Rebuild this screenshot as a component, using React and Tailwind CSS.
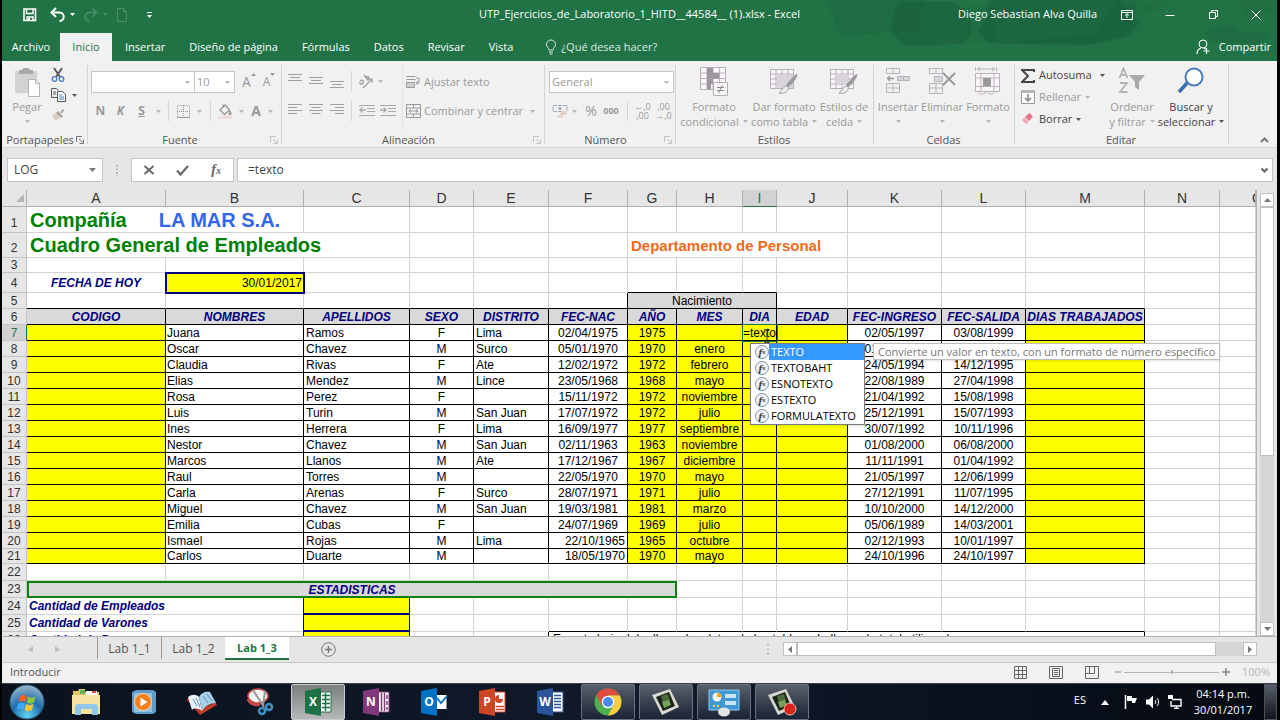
import clsx from 'clsx';

const COLUMNS = [
  { id: 'A', width: 'w-[139px]' },
  { id: 'B', width: 'w-[138px]' },
  { id: 'C', width: 'w-[106px]' },
  { id: 'D', width: 'w-16' },
  { id: 'E', width: 'w-[75px]' },
  { id: 'F', width: 'w-[79px]' },
  { id: 'G', width: 'w-[49px]' },
  { id: 'H', width: 'w-[66px]' },
  { id: 'I', width: 'w-[34px]' },
  { id: 'J', width: 'w-[71px]' },
  { id: 'K', width: 'w-[94px]' },
  { id: 'L', width: 'w-[84px]' },
  { id: 'M', width: 'w-[119px]' },
  { id: 'N', width: 'w-[75px]' },
  { id: 'O', width: '' },
];

const HEADINGS = [
  'CODIGO', 'NOMBRES', 'APELLIDOS', 'SEXO', 'DISTRITO', 'FEC-NAC', 'AÑO',
  'MES', 'DIA', 'EDAD', 'FEC-INGRESO', 'FEC-SALIDA', 'DIAS TRABAJADOS',
];

const EMPLEADOS = [
  ['Juana', 'Ramos', 'F', 'Lima', '02/04/1975', '1975', '', '02/05/1997', '03/08/1999'],
  ['Oscar', 'Chavez', 'M', 'Surco', '05/01/1970', '1970', 'enero', '01/02/1993', '05/10/1998'],
  ['Claudia', 'Rivas', 'F', 'Ate', '12/02/1972', '1972', 'febrero', '24/05/1994', '14/12/1995'],
  ['Elias', 'Mendez', 'M', 'Lince', '23/05/1968', '1968', 'mayo', '22/08/1989', '27/04/1998'],
  ['Rosa', 'Perez', 'F', '', '15/11/1972', '1972', 'noviembre', '21/04/1992', '15/08/1998'],
  ['Luis', 'Turin', 'M', 'San Juan', '17/07/1972', '1972', 'julio', '25/12/1991', '15/07/1993'],
  ['Ines', 'Herrera', 'F', 'Lima', '16/09/1977', '1977', 'septiembre', '30/07/1992', '10/11/1996'],
  ['Nestor', 'Chavez', 'M', 'San Juan', '02/11/1963', '1963', 'noviembre', '01/08/2000', '06/08/2000'],
  ['Marcos', 'Llanos', 'M', 'Ate', '17/12/1967', '1967', 'diciembre', '11/11/1991', '01/04/1992'],
  ['Raul', 'Torres', 'M', '', '22/05/1970', '1970', 'mayo', '21/05/1997', '12/06/1999'],
  ['Carla', 'Arenas', 'F', 'Surco', '28/07/1971', '1971', 'julio', '27/12/1991', '11/07/1995'],
  ['Miguel', 'Chavez', 'M', 'San Juan', '19/03/1981', '1981', 'marzo', '10/10/2000', '14/12/2000'],
  ['Emilia', 'Cubas', 'F', '', '24/07/1969', '1969', 'julio', '05/06/1989', '14/03/2001'],
  ['Ismael', 'Rojas', 'M', 'Lima', '22/10/1965', '1965', 'octubre', '02/12/1993', '10/01/1997'],
  ['Carlos', 'Duarte', 'M', '', '18/05/1970', '1970', 'mayo', '24/10/1996', '24/10/1997'],
];

const SUGERENCIAS = ['TEXTO', 'TEXTOBAHT', 'ESNOTEXTO', 'ESTEXTO', 'FORMULATEXTO'];

const Svg = ({ w = 16, h = 16, className, children, ...rest }) => (
  <svg
    width={w}
    height={h}
    viewBox={`0 0 ${w} ${h}`}
    fill="none"
    stroke="currentColor"
    aria-hidden="true"
    className={clsx('shrink-0', className)}
    {...rest}
  >
    {children}
  </svg>
);

const Caret = ({ className = 'text-[#b5b5b5]' }) => (
  <Svg w={5} h={3} className={className}>
    <path d="M0 0h5L2.5 3z" fill="currentColor" stroke="none" />
  </Svg>
);

/* ---------- title bar ---------- */

const QuickAccess = () => (
  <div className="flex items-center pl-5 text-white">
    <button type="button" aria-label="Guardar">
      <Svg>
        <path d="M2 2h11.5v11.5H2z" strokeWidth="1.6" />
        <path d="M4.500 2v4.500h6.500V2M5 13.500V10h6v3.500" strokeWidth="1.4" />
        <path d="M6 11h2v2.500H6z" fill="currentColor" stroke="none" />
      </Svg>
    </button>
    <button type="button" aria-label="Deshacer" className="ml-3 flex items-center gap-1">
      <Svg>
        <path d="M2 5.500h7.500a4 4 0 0 1 0 8.500" strokeWidth="2" />
        <path d="M6 1 1.500 5.500 6 10" strokeWidth="2" />
      </Svg>
      <Caret className="text-white" />
    </button>
    <button type="button" aria-label="Rehacer" className="ml-2 flex items-center gap-1 text-[#4c9069]">
      <Svg>
        <path d="M13 5.500H6.500a4 4 0 0 0 0 8.500M9.500 1.500 13.500 5.500l-4 4" strokeWidth="1.6" />
      </Svg>
      <Caret className="text-[#4c9069]" />
    </button>
    <button type="button" aria-label="Nuevo" className="ml-[6px] text-[#4c9069]">
      <Svg>
        <path d="M3.500 1.500h6l3 3v10h-9zM9.500 1.500v3h3" />
      </Svg>
    </button>
    <button type="button" aria-label="Personalizar" className="ml-4">
      <Svg w={7} h={8}>
        <path d="M1 1.500h5" />
        <path d="M1 4h5L3.500 7z" fill="currentColor" stroke="none" />
      </Svg>
    </button>
  </div>
);

const WINDOW_BUTTONS = [
  {
    label: 'Opciones de presentación de la cinta',
    icon: <path d="M2.500 3.500h11v9h-11zM2.500 5.500h11M8 11V7M6 8.500 8 6.800l2 1.700" />,
  },
  { label: 'Minimizar', icon: <path d="M3.500 8.500h9" /> },
  { label: 'Restaurar', icon: <path d="M4.500 5.500h6v6h-6zM6.500 5.500v-2h6v6h-2" /> },
  { label: 'Cerrar', icon: <path d="m3.500 3.500 9 9m0-9-9 9" /> },
];

const TitleBar = () => (
  <header className="relative grid h-[33px] grid-cols-[1fr_auto_1fr] items-center pb-1 text-[11px] text-white">
    <QuickAccess />
    <h1>UTP_Ejercicios_de_Laboratorio_1_HITD__44584__ (1).xlsx - Excel</h1>
    <div className="flex items-center justify-end">
      <span className="pr-2">Diego Sebastian Alva Quilla</span>
      {WINDOW_BUTTONS.map((b) => (
        <button key={b.label} type="button" aria-label={b.label} className="flex h-7 w-[43px] items-center justify-center">
          <Svg>{b.icon}</Svg>
        </button>
      ))}
    </div>
  </header>
);

/* brush strokes of the account's office background */
const BrushBackground = () => (
  <svg
    width="460"
    height="61"
    viewBox="0 0 460 61"
    fill="#185c37"
    aria-hidden="true"
    className="absolute top-0 right-0"
  >
    <path opacity=".25" d="M10 0h100l-6 16 2 14-84 6-6-18z" />
    <path opacity=".5" d="M82 2h54l18 10v22l-8 10-58 2-14-14 2-20z" />
    <path opacity=".5" d="M172 0h130l10 14 12 8-16 14-36 8-100-1-12-12 10-14z" />
    <path opacity=".3" d="M300 0h20l-4 24 10 4-18 10-40 8-90-2 100-10zM388 30l24-5 14 8 22-2 4 4-10 10-50-4z" />
    <path opacity=".15" d="M150 6h30v36h-30zM300 4l60-4-20 10-30 8zM420 0h40v12l-30 6z" />
  </svg>
);

const TABS = ['Insertar', 'Diseño de página', 'Fórmulas', 'Datos', 'Revisar', 'Vista'];

const RibbonTabs = () => (
  <nav className="relative flex h-7 items-center text-[11px] text-white">
    <button type="button" className="h-full w-[58px]">Archivo</button>
    <button type="button" className="h-full w-[52px] bg-[#f1f1f1] text-[#217346]">Inicio</button>
    <div className="flex gap-6 pl-[13px]">
      {TABS.map((t) => (
        <button key={t} type="button">{t}</button>
      ))}
    </div>
    <button type="button" className="ml-8 flex items-center gap-1 text-[#dcebe2]">
      <Svg w={12} h={16}>
        <path d="M4 11c0-2-2.500-3-2.500-5.500a4.500 4.500 0 0 1 9 0C10.500 8 8 9 8 11zM4 13h4M4.500 15h3" />
      </Svg>
      ¿Qué desea hacer?
    </button>
    <button type="button" className="ml-auto flex items-center gap-2 pr-[6px]">
      <Svg w={15} h={16}>
        <circle cx="7" cy="5" r="4" />
        <path d="M1 15c0-3 1.500-5 4-6M8 9l1.500 1M10.500 9v6M7.500 12h6" strokeWidth="1.2" />
      </Svg>
      Compartir
    </button>
  </nav>
);

/* ---------- ribbon ---------- */

const Launcher = ({ className = 'text-[#c0c0c0]' }) => (
  <button type="button" aria-label="Más opciones" className={className}>
    <Svg w={8} h={8}>
      <path d="M.5 6V.5H6M3 3l3.500 3.500M7.500 3.500v4h-4" />
    </Svg>
  </button>
);

const Group = ({ label, width, launcher, children }) => (
  <section className={clsx('relative flex shrink-0 flex-col', width)}>
    <div className="flex h-[71px] pt-1">{children}</div>
    <div className="flex h-[15px] items-center pr-1 pl-[2px] text-[11px] leading-[14px] text-[#555]">
      <span className="flex-1 text-center">{label}</span>
      {launcher}
    </div>
    <span className="absolute top-1 right-0 h-[79px] w-px bg-[#d4d4d4]" />
  </section>
);

const Tool = ({ label, className = 'w-[21px]', children }) => (
  <button type="button" aria-label={label} className={clsx('flex h-5 shrink-0 items-center justify-center', className)}>
    {children}
  </button>
);

const Divider = () => <span className="h-5 w-px shrink-0 bg-[#d4d4d4]" />;

const BigButton = ({ icon, lines, width, dark }) => (
  <button
    type="button"
    className={clsx(
      'flex shrink-0 flex-col items-center pt-[2px] text-[11px] leading-[15px] whitespace-nowrap',
      width,
      dark ? 'text-[#444]' : 'text-[#999]',
    )}
  >
    <span className="flex h-8 items-start">{icon}</span>
    <span>{lines[0]}</span>
    <span className="flex h-[15px] items-center gap-1">
      {lines[1]}
      <Caret className={dark ? 'text-[#555]' : 'text-[#b5b5b5]'} />
    </span>
  </button>
);

const PasteIcon = () => (
  <Svg w={28} h={30}>
    <path d="M2 4h22v22H2z" fill="#d2d2d2" stroke="none" />
    <path d="M6 3h3c0-3 8-3 8 0h3v4H6z" fill="#a9a9a9" stroke="none" />
    <path d="M15.500 12.500h7l4 4v13h-11z" fill="#fff" stroke="#b5b5b5" />
    <path d="M22.500 12.500v4h4" stroke="#b5b5b5" />
  </Svg>
);

const Lines = ({ widths, top = 0, align = 'left' }) => (
  <Svg w={14} h={14}>
    {widths.map((len, i) => {
      const x = align === 'left' ? 0 : align === 'center' ? (14 - len) / 2 : 14 - len;
      return <path key={i} d={`M${x} ${top + i * 3 + 0.5}h${len}`} />;
    })}
  </Svg>
);

const IndentIcon = ({ flip }) => (
  <Svg w={16} h={14} className="text-[#a9a9a9]">
    <path d="M0 1.500h16M8 4.500h8M8 7.500h8M0 11.500h16" />
    {flip ? <path d="M0 6h6M3.500 3.500 6 6 3.500 8.500" strokeWidth="1.4" /> : <path d="M7 6H1M3.500 3.500 1 6l2.500 2.500" strokeWidth="1.4" />}
  </Svg>
);

const ClipboardGroup = () => (
  <Group label="Portapapeles" width="w-[86px]" launcher={<Launcher className="text-[#777]" />}>
    <BigButton icon={<PasteIcon />} lines={['Pegar', '']} width="w-[50px]" />
    <div className="flex flex-col text-[#555]">
      <Tool label="Cortar" className="w-3">
        <Svg w={14} h={16}>
          <path d="m3 1 6 9M11 1 5 10" strokeWidth="1.8" />
          <circle cx="3.500" cy="12" r="2.300" stroke="#4a7ebb" strokeWidth="1.3" />
          <circle cx="10.500" cy="12" r="2.300" stroke="#4a7ebb" strokeWidth="1.3" />
        </Svg>
      </Tool>
      <Tool label="Copiar" className="w-6 gap-[6px]">
        <Svg w={15} h={14}>
          <path d="M.5.500h5l2 2v7h-7zM2 4h3M2 6h3" />
          <path d="M6.500 3.500h5l3 3v7h-8z" fill="#fff" />
          <path d="M8 7h3M8 9h5M8 11h5" stroke="#4a7ebb" />
        </Svg>
        <Caret className="text-[#555]" />
      </Tool>
      <Tool label="Copiar formato" className="w-3">
        <Svg w={14} h={14}>
          <path d="m1 8 4-3 4 4-4 4z" fill="#dcc9c4" stroke="none" />
          <path d="m5 5 2-2 5 5-2 2zM9 4l3-3 1.500 1.500-3 3z" fill="#a9a9a9" stroke="none" />
        </Svg>
      </Tool>
    </div>
  </Group>
);

const FontGroup = () => (
  <Group label="Fuente" width="w-[194px]" launcher={<Launcher />}>
    <div className="flex flex-col gap-2 pt-[6px] pl-[3px] text-[#999]">
      <div className="flex items-center">
        <label className="flex h-[22px] w-[104px] items-center border border-[#c6c6c6] bg-white pr-1">
          <input aria-label="Fuente" className="w-full min-w-0 flex-1 outline-none" />
          <Caret />
        </label>
        <label className="flex h-[22px] w-10 items-center border border-l-0 border-[#c6c6c6] bg-white pr-1 pl-[2px]">
          <input aria-label="Tamaño" defaultValue="10" className="w-full min-w-0 flex-1 text-[11px] outline-none" />
          <Caret />
        </label>
        <Tool label="Aumentar tamaño" className="ml-1 w-5 items-start text-sm leading-5">
          A<Svg w={5} h={4}><path d="M0 4h5L2.500 1z" fill="currentColor" stroke="none" /></Svg>
        </Tool>
        <Tool label="Reducir tamaño" className="w-5 items-start text-xs leading-5">
          A<Svg w={5} h={4}><path d="M0 1h5L2.500 4z" fill="currentColor" stroke="none" /></Svg>
        </Tool>
      </div>
      <div className="flex h-5 items-center text-xs font-bold">
        <Tool label="Negrita" className="w-[19px]">N</Tool>
        <Tool label="Cursiva"><i>K</i></Tool>
        <Tool label="Subrayado"><u>S</u></Tool>
        <Tool label="Tipo de subrayado" className="w-3"><Caret /></Tool>
        <span className="w-1" />
        <Divider />
        <Tool label="Bordes" className="w-7">
          <Svg w={13} h={13}>
            <path d="M.5.500h12v12H.5zM6.500 0v13M0 6.500h13" strokeDasharray="1 1" />
            <path d="M0 12.500h13" />
          </Svg>
        </Tool>
        <Caret />
        <span className="w-2" />
        <Divider />
        <Tool label="Color de relleno" className="w-7">
          <Svg w={16} h={16}>
            <path d="m3 7 5-5 4.500 5-5 4.500zM6 5V1.500" strokeWidth="1.3" />
            <path d="M13 8c1.500 2 1.500 4 0 4s-1-2 0-4" fill="currentColor" />
            <path d="M1 13h14v3H1z" fill="#f2dcdb" stroke="none" />
          </Svg>
        </Tool>
        <Caret />
        <Tool label="Color de fuente" className="w-6 text-sm">A</Tool>
        <Caret />
      </div>
    </div>
  </Group>
);

const AlignGroup = () => (
  <Group label="Alineación" width="w-[263px]" launcher={<Launcher />}>
    <div className="flex flex-col gap-[10px] pt-[6px] pl-[2px] text-[#a0a0a0]">
      <div className="flex items-center">
        <Tool label="Alinear arriba"><Lines widths={[14, 10, 14]} align="center" /></Tool>
        <Tool label="Alinear al medio"><Lines widths={[14, 10, 14]} top={3} align="center" /></Tool>
        <Tool label="Alinear abajo"><Lines widths={[14, 10, 14]} top={7} align="center" /></Tool>
        <span className="w-1" />
        <Divider />
        <Tool label="Orientación" className="w-9 gap-1">
          <Svg>
            <path d="m5 15 9-9M14 10V6h-4" strokeWidth="1.200" />
            <path d="M2 8c2-2 4 0 3 2s-4 1-3-1M6 2l4 5c2-1 1-4-2-3" strokeWidth="1.400" />
          </Svg>
          <Caret />
        </Tool>
      </div>
      <div className="flex items-center">
        <Tool label="Alinear a la izquierda"><Lines widths={[14, 9, 14, 9]} /></Tool>
        <Tool label="Centrar"><Lines widths={[14, 9, 14, 9]} align="center" /></Tool>
        <Tool label="Alinear a la derecha"><Lines widths={[14, 9, 14, 9]} align="right" /></Tool>
        <span className="w-1" />
        <Divider />
        <span className="w-1" />
        <Tool label="Disminuir sangría"><IndentIcon /></Tool>
        <Tool label="Aumentar sangría"><IndentIcon flip /></Tool>
      </div>
    </div>
    <div className="ml-1 flex flex-col gap-[9px] border-l border-[#e4e4e4] pt-[7px] pl-[3px] text-[11px] text-[#999]">
      <button type="button" className="flex h-5 items-center gap-[3px]">
        <Svg w={15} h={15}>
          <path d="M.5 1.500h9M.5 4.500h9M.5 7.500h8v5h-8zM10 3h3v5h-3M12 6l-2 2 2 2" />
          <path d="M1 8h7v4H1z" fill="#cfcfcf" stroke="none" />
        </Svg>
        Ajustar texto
      </button>
      <button type="button" className="flex h-5 items-center gap-[3px] whitespace-nowrap">
        <Svg w={15} h={14}>
          <path d="M.5.500h14v13H.5zM.5 4h14M.5 10h14M7.500 0v4M7.500 10v4M3 7h9M5 5.500 3 7l2 1.500M10 5.500 12 7l-2 1.500" />
        </Svg>
        <span className="pr-1">Combinar y centrar</span>
        <Caret />
      </button>
    </div>
  </Group>
);

const NumberGroup = () => (
  <Group label="Número" width="w-[131px]" launcher={<Launcher />}>
    <div className="flex flex-1 flex-col gap-2 px-1 pt-[6px] text-[11px] text-[#999]">
      <label className="flex h-[22px] items-center border border-[#c6c6c6] bg-white pr-1 pl-[2px]">
        <input aria-label="Formato de número" defaultValue="General" className="w-full min-w-0 flex-1 outline-none" />
        <Caret />
      </label>
      <div className="flex h-5 items-center">
        <Tool label="Moneda" className="w-[30px] gap-1">
          <Svg w={16} h={14}>
            <path d="M1 1.500h14v6H1z" stroke="#9fa8b8" strokeDasharray="4 1" />
            <circle cx="8" cy="4.500" r="1.500" fill="#9fa8b8" stroke="none" />
            <path d="M9 8h6M8 10h6M5 12.500h6" stroke="#e3cfc4" strokeWidth="2" />
          </Svg>
          <Caret />
        </Tool>
        <Tool label="Porcentaje" className="w-6 text-sm">%</Tool>
        <Tool label="Millares" className="w-4 text-[9px] font-bold">000</Tool>
        <span className="w-2" />
        <Divider />
        <Tool label="Aumentar decimales" className="ml-1 w-[21px] flex-col text-[9px] leading-[9px]">
          <span>←,0</span>
          <span>,00</span>
        </Tool>
        <Tool label="Disminuir decimales" className="w-[21px] flex-col text-[9px] leading-[9px]">
          <span>,00</span>
          <span>→,0</span>
        </Tool>
      </div>
    </div>
  </Group>
);

const CondFormatIcon = () => (
  <Svg w={28} h={29} className="text-[#b9adb9]">
    <path d="M.5.500h25v22H.5zM.5 6h25M.5 11.500h25M.5 17h25M7 0v22M13 0v22M19.500 0v22" fill="#faf7fa" />
    <path d="M7 1h6v5H7zM7 6h12v5.500H7zM7 12h6v5H7zM7 17h4v5H7z" fill="#9d959d" stroke="none" />
    <path d="M13.500 15.500h14v13h-14z" fill="#f7f7f7" />
    <path d="M17 20.500h7M17 23.500h7M22.500 18l-4 8" stroke="#8a8a8a" />
  </Svg>
);

const TableStyleIcon = ({ solid }) => (
  <Svg w={29} h={29} className="text-[#b9adb9]">
    <path d="M.5 2.500h23v19H.5zM.5 7h23M.5 12h23M.5 17h23M6 2v19M12 2v19M18 2v19" fill="#faf7fa" />
    <path d={solid ? 'M6 7h12v10H6z' : 'M7 8h16v13H7z'} fill="#d8d4dc" stroke="none" />
    <path d="M27 7c2 2-6 12-9 13l-2-2C18 15 25 7 27 7z" fill="#9a9a9a" stroke="none" />
    <path d="M16 19c3 0 3 4 0 6-2 1-5 2-7 1 3-1 3-6 7-7z" fill="#efefef" stroke="#a0a0a0" />
  </Svg>
);

const StylesGroup = () => (
  <Group label="Estilos" width="w-[198px]">
    <BigButton icon={<CondFormatIcon />} lines={['Formato', 'condicional']} width="w-[76px]" />
    <BigButton icon={<TableStyleIcon />} lines={['Dar formato', 'como tabla']} width="w-16" />
    <BigButton icon={<TableStyleIcon solid />} lines={['Estilos de', 'celda']} width="w-14" />
  </Group>
);

const InsertIcon = () => (
  <Svg w={26} h={28} className="text-[#b9b2b9]">
    <path d="M1.500 1.500h13v5h-13zM8 1v5M1.500 16.500h13v9h-13zM8 16v10M1 21h14" />
    <path d="M12.500 9.500h12v4h-12zM18.500 9v4" fill="#d8d4dc" />
    <path d="M9 11.500H2M5 9l-2.500 2.500L5 14" stroke="#999" strokeWidth="1.300" />
  </Svg>
);

const DeleteIcon = () => (
  <Svg w={28} h={28} className="text-[#b9b2b9]">
    <path d="M1.500 1.500h13v5h-13zM8 1v5M1.500 16.500h13v10h-13zM8 16v11M1 21h14" />
    <path d="M6.500 9.500h8v5h-8z" fill="#d8d4dc" />
    <path d="m15 6 12 12M27 6 15 18" stroke="#999" strokeWidth="2" />
  </Svg>
);

const CellFormatIcon = () => (
  <Svg w={28} h={29} className="text-[#b9b2b9]">
    <path d="M1.500 6.500h24v18h-24zM7 6v18M20 6v18M1.500 11h24M1.500 19.500h24M4 24c0 3 5 4 7 2l2-2c2 4 6 4 8 0" fill="#faf7fa" />
    <path d="M9 11h8v8H9z" fill="#999" stroke="none" />
    <path d="M1.500 0v4M22.500 0v4M3 2h18M6 0 3.500 2 6 4M18 0l2.500 2L18 4" />
  </Svg>
);

const CellsGroup = () => (
  <Group label="Celdas" width="w-[141px]">
    <BigButton icon={<InsertIcon />} lines={['Insertar', '']} width="w-12" />
    <BigButton icon={<DeleteIcon />} lines={['Eliminar', '']} width="w-10" />
    <BigButton icon={<CellFormatIcon />} lines={['Formato', '']} width="w-[52px]" />
  </Group>
);

const SortIcon = () => (
  <Svg w={28} h={28} className="text-[#b3b3b3]">
    <path d="M1.500 11 5.500 1.500 9.500 11M3 8h5M2 16h7l-7 9h7.500" strokeWidth="1.800" />
    <path d="M11 8h16l-6 7v8l-4-3v-5z" fill="#a9a9a9" stroke="none" />
  </Svg>
);

const FindIcon = () => (
  <Svg w={28} h={28}>
    <path d="m2 25 9-10" stroke="#3a6fb0" strokeWidth="3.500" />
    <circle cx="17" cy="10" r="8.500" fill="#fff" stroke="#4a7ebb" strokeWidth="2" />
  </Svg>
);

const EditGroup = () => (
  <Group label="Editar" width="w-[214px]">
    <div className="flex w-[90px] flex-col pl-[6px] text-[11px] text-[#444]">
      <button type="button" className="flex h-[21px] items-center gap-1">
        <Svg w={14} h={14}>
          <path d="M13 3V1H1l6 6-6 6h12v-2" strokeWidth="2" />
        </Svg>
        <span className="flex-1 text-left">Autosuma</span>
        <Caret className="text-[#555]" />
      </button>
      <button type="button" className="flex h-[22px] items-center gap-1 text-[#999]">
        <Svg w={14} h={14}>
          <path d="M.5.500h13v13H.5z" fill="#fff" />
          <path d="M0 0h14v3H0z" fill="#b5b5b5" stroke="none" />
          <path d="M7 4v7M4 8l3 3 3-3" strokeWidth="1.800" />
        </Svg>
        Rellenar
        <Caret />
      </button>
      <button type="button" className="flex h-[22px] items-center gap-1">
        <Svg w={14} h={14}>
          <path d="m1 8 4 4 2.500-2.500-4-4z" fill="#f0a8b4" stroke="none" />
          <path d="m4 5 4.500-4L12 4.500 8 9z" fill="#e3748a" stroke="none" />
        </Svg>
        Borrar
        <Caret className="text-[#555]" />
      </button>
    </div>
    <BigButton icon={<SortIcon />} lines={['Ordenar', 'y filtrar']} width="w-[54px]" />
    <BigButton icon={<FindIcon />} lines={['Buscar y', 'seleccionar']} width="w-16" dark />
  </Group>
);

const Ribbon = () => (
  <div className="flex h-[86px] shrink-0 overflow-hidden bg-[#f1f1f1]">
    <ClipboardGroup />
    <FontGroup />
    <AlignGroup />
    <NumberGroup />
    <StylesGroup />
    <CellsGroup />
    <EditGroup />
    <button type="button" aria-label="Contraer la cinta" className="mt-auto ml-auto pr-2 pb-1 text-[#777]">
      <Svg w={9} h={6}><path d="m1 5 3.500-3.500L8 5" strokeWidth="2" /></Svg>
    </button>
  </div>
);

const FormulaBar = () => (
  <div className="flex h-[43px] shrink-0 items-start border-t border-[#d4d4d4] bg-[#e6e6e6] pt-[10px] pr-1 pl-[5px] text-xs text-[#444]">
    <label className="flex h-6 w-24 items-center border border-[#c6c6c6] bg-white px-[6px]">
      <input aria-label="Cuadro de nombres" defaultValue="LOG" className="w-full min-w-0 flex-1 outline-none" />
      <Svg w={7} h={4} className="text-[#777]"><path d="M0 0h7L3.500 4z" fill="currentColor" stroke="none" /></Svg>
    </label>
    <Svg w={28} h={24} className="text-[#a0a0a0]">
      <path d="M14 7v11" strokeDasharray="1.500 2" strokeWidth="1.500" />
    </Svg>
    <div className="flex h-6 w-[103px] items-center border border-[#c6c6c6] bg-white text-[#666]">
      <button type="button" aria-label="Cancelar" className="flex flex-1 justify-center">
        <Svg w={12} h={12}><path d="m1.500 2 9 8M10.500 2l-9 8" strokeWidth="1.800" /></Svg>
      </button>
      <button type="button" aria-label="Introducir" className="flex flex-1 justify-center">
        <Svg w={13} h={12}><path d="m1 6.500 3.500 4L12 2" strokeWidth="2.200" /></Svg>
      </button>
      <button type="button" aria-label="Insertar función" className="flex-1 text-center font-['Liberation_Serif',serif] text-sm leading-4 font-bold italic">
        f<span className="text-[10px]">x</span>
      </button>
    </div>
    <label className="ml-[3px] flex h-6 flex-1 items-center border border-[#c6c6c6] bg-white pr-1 pl-[10px]">
      <input aria-label="Barra de fórmulas" defaultValue="=texto" className="flex-1 outline-none" />
      <Svg w={7} h={6} className="text-[#666]"><path d="m.5 1.500 3 3 3-3" strokeWidth="2" /></Svg>
    </label>
  </div>
);

/* ---------- sheet ---------- */

const FxBadge = () => (
  <span className="mx-1 flex size-[14px] shrink-0 items-center justify-center rounded-full border border-[#8a93a5] bg-[#f0f2f6] font-['Liberation_Serif',serif] text-[11px] leading-3 font-bold text-[#333] italic">
    f<span className="text-[7px]">x</span>
  </span>
);

const Autocomplete = () => (
  <div className="absolute top-[18px] left-[7px] z-10 flex items-start gap-2 font-['Open_Sans',sans-serif] text-[11px]">
    <ul role="listbox" aria-label="Funciones" className="w-[115px] border border-[#7a7a7a] bg-white text-left text-black shadow-sm">
      {SUGERENCIAS.map((s, i) => (
        <li key={s} role="option" aria-selected={i === 0} className="flex h-4 items-center">
          <FxBadge />
          <span className={clsx('-ml-1 flex-1 pl-[2px] leading-4', i === 0 && 'bg-[#3399ff] text-white')}>{s}</span>
        </li>
      ))}
    </ul>
    <div role="tooltip" className="border border-[#bdbdbd] bg-white px-1 leading-[15px] whitespace-nowrap text-[#777] shadow-sm">
      Convierte un valor en texto, con un formato de número específico
    </div>
  </div>
);

const GRID = 'border-r border-b border-[#d4d4d4] p-0';
const GRID_OVER_BOX = 'border-r border-b border-[#d4d4d4] border-b-black p-0';
const BOX = 'border-r border-b border-black p-0';

const RowHead = ({ n, active, tall }) => (
  <th
    scope="row"
    className={clsx(
      'border-r border-b p-0 text-center font-normal',
      tall && 'pb-[2px] align-bottom',
      active ? 'border-[#c4c4c4] border-r-[#217346] bg-[#d2d2d2] text-[#217346]' : 'border-[#c4c4c4] bg-[#e6e6e6] text-[#333]',
    )}
  >
    {n}
  </th>
);

const Blank = ({ count, className = GRID }) =>
  Array.from({ length: count }, (_, i) => <td key={i} className={className} />);

const EmpleadoRow = ({ n, data }) => {
  const [nombre, apellido, sexo, distrito, nac, anio, mes, ingreso, salida] = data;
  const active = n === 7;
  return (
    <tr className={n === 21 ? 'h-[15px]' : 'h-4'}>
      <RowHead n={n} active={active} />
      <td className={clsx(BOX, 'bg-[#ffff00]')} />
      <td className={clsx(BOX, 'pl-px')}>{nombre}</td>
      <td className={clsx(BOX, 'pl-[2px]')}>{apellido}</td>
      <td className={clsx(BOX, 'text-center')}>{sexo}</td>
      <td className={clsx(BOX, 'pl-[2px]')}>{distrito}</td>
      <td className={clsx(BOX, n >= 20 ? 'pr-[2px] text-right' : 'text-center')}>{nac}</td>
      <td className={clsx(BOX, 'bg-[#ffff00] text-center')}>{anio}</td>
      <td className={clsx(BOX, 'bg-[#ffff00] text-center')}>{mes}</td>
      <td className={clsx(BOX, 'bg-[#ffff00]', active && 'relative outline outline-[#217346]')}>
        {active && (
          <>
            =texto
            <Svg w={8} h={14} className="absolute top-1 left-5 text-[#333]">
              <path d="M1.500.500h2l.5.500.5-.500h2M4 1v12M1.500 13.500h2L4 13l.5.500h2" />
            </Svg>
            <Autocomplete />
          </>
        )}
      </td>
      <td className={clsx(BOX, 'bg-[#ffff00]')} />
      <td className={clsx(BOX, 'text-center')}>{ingreso}</td>
      <td className={clsx(BOX, 'text-center')}>{salida}</td>
      <td className={clsx(BOX, 'bg-[#ffff00]')} />
      <Blank count={2} />
    </tr>
  );
};

const StatRow = ({ n, label }) => (
  <tr className="h-[17px]">
    <RowHead n={n} />
    <td colSpan={2} className={clsx(GRID, 'pl-[2px] font-bold text-[#000080] italic')}>{label}</td>
    <td className="border-r border-b-2 border-[#000080] bg-[#ffff00] p-0 shadow-[-1px_0_0_#000080]" />
    {n < 25 && <Blank count={12} />}
    {n === 25 && (
      <>
        <Blank count={2} />
        <Blank count={8} className={GRID_OVER_BOX} />
        <Blank count={2} />
      </>
    )}
    {n > 25 && (
      <>
        <Blank count={1} />
        <td className="border-r border-b border-black border-b-[#d4d4d4] p-0" />
        <td colSpan={8} className="border-r border-black p-0 pl-1 align-top">
          En esta hoja debe llenar los datos de las tablas y hallar cada total utilizando
        </td>
        <Blank count={2} />
      </>
    )}
  </tr>
);

const Sheet = () => (
  <div className="min-w-0 flex-1 overflow-hidden border-r border-[#b0b0b0] bg-white">
    <table className="w-full table-fixed border-separate border-spacing-0 font-['Liberation_Sans',Arial,sans-serif] text-xs leading-[14px] whitespace-nowrap text-black">
      <thead>
        <tr className="h-[17px] text-sm leading-4 text-[#333]">
          <th className="w-[25px] border-r border-b border-[#b0b0b0] bg-[#e6e6e6] p-0">
            <Svg w={10} h={8} className="ml-auto text-[#b4b4b4]"><path d="M8 0v8H0z" fill="currentColor" stroke="none" /></Svg>
          </th>
          {COLUMNS.map((c) => (
            <th
              key={c.id}
              scope="col"
              className={clsx(
                'overflow-hidden border-r border-b p-0 font-normal',
                c.width,
                c.id === 'I' ? 'border-[#b0b0b0] border-b-[#217346] bg-[#d2d2d2] text-[#217346]' : 'border-[#b0b0b0] bg-[#e6e6e6]',
                c.id === 'O' && 'pl-8 text-clip',
              )}
            >
              {c.id}
            </th>
          ))}
        </tr>
      </thead>
      <tbody>
        <tr className="h-[26px]">
          <RowHead n={1} tall />
          <td colSpan={2} className={clsx(GRID, 'pl-[3px] text-xl leading-6 font-bold text-[#008000]')}>
            Compañía<span className="ml-8 text-[#3366ee]">LA MAR S.A.</span>
          </td>
          <Blank count={13} />
        </tr>
        <tr className="h-[25px]">
          <RowHead n={2} tall />
          <td colSpan={3} className={clsx(GRID, 'pl-[3px] text-xl leading-6 font-bold text-[#008000]')}>Cuadro General de Empleados</td>
          <Blank count={3} />
          <td colSpan={4} className={clsx(GRID, 'pt-[2px] pl-[3px] text-[15px] leading-5 font-bold text-[#f26a1b]')}>Departamento de Personal</td>
          <Blank count={5} />
        </tr>
        <tr className="h-[15px]">
          <RowHead n={3} />
          <Blank count={15} />
        </tr>
        <tr className="h-5">
          <RowHead n={4} />
          <td className={clsx(GRID, 'text-center font-bold text-[#000080] italic')}>FECHA DE HOY</td>
          <td className="bg-[#ffff00] p-0 pr-[2px] text-right outline-2 -outline-offset-1 outline-[#000080]">30/01/2017</td>
          <Blank count={4} />
          <Blank count={3} className={GRID_OVER_BOX} />
          <Blank count={6} />
        </tr>
        <tr className="h-4">
          <RowHead n={5} />
          <Blank count={5} className={GRID_OVER_BOX} />
          <td className={BOX} />
          <td colSpan={3} className={clsx(BOX, 'bg-[#d9d9d9] text-center')}>Nacimiento</td>
          <Blank count={4} className={GRID_OVER_BOX} />
          <Blank count={2} />
        </tr>
        <tr className="h-4">
          <RowHead n={6} />
          {HEADINGS.map((h) => (
            <td key={h} className={clsx(BOX, 'bg-[#d9d9d9] text-center font-bold text-[#000080] italic')}>{h}</td>
          ))}
          <Blank count={2} />
        </tr>
        {EMPLEADOS.map((e, i) => (
          <EmpleadoRow key={e[0]} n={i + 7} data={e} />
        ))}
        <tr className="h-[17px]">
          <RowHead n={22} />
          <Blank count={15} />
        </tr>
        <tr className="h-[17px]">
          <RowHead n={23} />
          <td colSpan={7} className="bg-[#d9d9d9] p-0 text-center font-bold text-[#000080] italic outline-2 -outline-offset-2 outline-[#108010]">
            ESTADISTICAS
          </td>
          <Blank count={8} />
        </tr>
        <StatRow n={24} label="Cantidad de Empleados" />
        <StatRow n={25} label="Cantidad de Varones" />
        <StatRow n={26} label="Cantidad de Damas" />
      </tbody>
    </table>
  </div>
);

const SCROLL_BUTTON = 'flex shrink-0 items-center justify-center border border-[#c0c0c0] bg-white text-[#777]';

const VerticalScroll = () => (
  <div className="flex w-5 shrink-0 flex-col items-center bg-[#e6e6e6] pt-[3px]">
    <button type="button" aria-label="Arriba" className={clsx(SCROLL_BUTTON, 'h-[14px] w-[14px]')}>
      <Svg w={7} h={4}><path d="M0 4h7L3.500 0z" fill="currentColor" stroke="none" /></Svg>
    </button>
    <div className="w-[14px] flex-1 bg-[#d6d6d6]">
      <div className="h-[60%] border border-[#c0c0c0] bg-white" />
    </div>
    <button type="button" aria-label="Abajo" className={clsx(SCROLL_BUTTON, 'h-[14px] w-[14px]')}>
      <Svg w={7} h={4}><path d="M0 0h7L3.500 4z" fill="currentColor" stroke="none" /></Svg>
    </button>
  </div>
);

const SheetTabs = () => (
  <div className="flex h-[26px] shrink-0 items-start border-t border-[#b0b0b0] bg-[#e6e6e6] text-xs text-[#555]">
    <div className="flex h-6 w-[95px] items-center gap-[22px] pl-[26px] text-[#c0c0c0]">
      <button type="button" aria-label="Hoja anterior">
        <Svg w={5} h={7}><path d="M5 0v7L0 3.500z" fill="currentColor" stroke="none" /></Svg>
      </button>
      <button type="button" aria-label="Hoja siguiente">
        <Svg w={5} h={7}><path d="M0 0v7l5-3.500z" fill="currentColor" stroke="none" /></Svg>
      </button>
    </div>
    <button type="button" className="h-[22px] w-16 border-l border-[#999] pt-[2px]">Lab 1_1</button>
    <button type="button" className="h-[22px] w-16 border-l border-[#999] pt-[2px]">Lab 1_2</button>
    <button type="button" className="h-[23px] w-16 border-b-2 border-[#217346] bg-white pt-[2px] text-[11px] font-bold text-[#217346]">Lab 1_3</button>
    <button type="button" aria-label="Hoja nueva" className="mt-[5px] ml-8 text-[#777]">
      <Svg w={15} h={15}>
        <circle cx="7.500" cy="7.500" r="6.800" />
        <path d="M7.500 4v7M4 7.500h7" strokeWidth="1.500" />
      </Svg>
    </button>
    <div className="mt-[5px] mr-5 ml-auto flex h-[14px] w-[491px] items-center">
      <Svg w={4} h={11} className="text-[#aaa]"><path d="M2 0v11" strokeDasharray="1.500 3" strokeWidth="1.500" /></Svg>
      <button type="button" aria-label="Izquierda" className={clsx(SCROLL_BUTTON, 'ml-[13px] h-full w-[14px]')}>
        <Svg w={4} h={7}><path d="M4 0v7L0 3.500z" fill="currentColor" stroke="none" /></Svg>
      </button>
      <div className="h-full flex-1 bg-[#d6d6d6]">
        <div className="h-full w-[94%] border border-[#c0c0c0] bg-white" />
      </div>
      <button type="button" aria-label="Derecha" className={clsx(SCROLL_BUTTON, 'h-full w-[14px]')}>
        <Svg w={4} h={7}><path d="M0 0v7l4-3.500z" fill="currentColor" stroke="none" /></Svg>
      </button>
    </div>
  </div>
);

const StatusBar = () => (
  <footer className="flex h-[21px] shrink-0 items-center border-t border-[#c8c8c8] bg-[#f1f1f1] pr-[7px] pb-[2px] pl-2 text-[11px] text-[#555]">
    <span className="flex-1">Introducir</span>
    <div className="flex items-center gap-[22px] text-[#666]">
      <button type="button" aria-label="Normal">
        <Svg w={13} h={13}><path d="M.5.500h12v12H.5zM4.500 0v13M8.500 0v13M0 4.500h13M0 8.500h13" /></Svg>
      </button>
      <button type="button" aria-label="Diseño de página">
        <Svg w={14} h={13}><path d="M.5.500h13v12H.5zM3.500 2.500h7v8h-7zM5 4.500h4M5 6.500h4M5 8.500h4" /></Svg>
      </button>
      <button type="button" aria-label="Salto de página">
        <Svg w={14} h={13}><path d="M.5.500h13v12H.5zM4.500 0v7.500H.5M9.500 0v7.500h-5" /></Svg>
      </button>
    </div>
    <button type="button" aria-label="Alejar" className="ml-4 text-[#aaa]">
      <Svg w={6} h={8}><path d="M0 4h6" strokeWidth="1.500" /></Svg>
    </button>
    <input
      type="range"
      aria-label="Zoom"
      defaultValue="50"
      className="mx-[3px] h-px w-[95px] appearance-none bg-[#b5b5b5] [&::-webkit-slider-thumb]:h-1 [&::-webkit-slider-thumb]:w-[2px] [&::-webkit-slider-thumb]:appearance-none [&::-webkit-slider-thumb]:bg-[#b5b5b5]"
    />
    <button type="button" aria-label="Acercar" className="text-[#888]">
      <Svg w={8} h={8}><path d="M0 4h8M4 0v8" strokeWidth="1.500" /></Svg>
    </button>
    <span className="w-10 text-right text-[#b5b5b5]">100%</span>
  </footer>
);

/* ---------- taskbar ---------- */

const StartOrb = () => (
  <Svg w={36} h={36}>
    <defs>
      <radialGradient id="orb" cx="50%" cy="90%" r="90%">
        <stop offset="0" stopColor="#5fd3f3" />
        <stop offset=".5" stopColor="#1f6fae" />
        <stop offset="1" stopColor="#9db8cc" />
      </radialGradient>
    </defs>
    <circle cx="18" cy="18" r="17" fill="url(#orb)" stroke="#2d5b80" />
    <path d="M11 12c2-1.500 4.500-1.500 7 0l-1.500 6c-2.500-1.500-4.500-1.500-7 0z" fill="#f0622d" stroke="none" />
    <path d="M19 12.500c2 1.500 5 1.500 7.500 0L25 18.500c-2.500 1.500-5 1.500-7.300 0z" fill="#8cc63f" stroke="none" />
    <path d="M9 19.500c2.500-1.500 5-1.500 7 0l-1.500 6c-2-1.500-4.500-1.500-7 0z" fill="#3fa9f5" stroke="none" />
    <path d="M17.200 20c2.300 1.500 5 1.500 7.300 0L23 26c-2.500 1.500-5 1.500-7.300 0z" fill="#fdc72f" stroke="none" />
  </Svg>
);

const FolderIcon = () => (
  <Svg w={30} h={30} stroke="none">
    <path d="M2 4h5l1-2h6v3h14v21H2z" fill="#e9c766" />
    <path d="M9 3h5v4H9z" fill="#5bb85b" />
    <path d="M15 4h11v4H15z" fill="#fff" />
    <path d="M21 4h4v2h-4z" fill="#d9534f" />
    <path d="M1 8h28v19H1z" fill="#f6e3a1" />
    <path d="M7 17h17c2 0 3 1 3 3v8h-6v-6H10v6H4v-8c0-2 1-3 3-3z" fill="#8fc8e8" />
  </Svg>
);

const MediaIcon = () => (
  <Svg w={28} h={28} stroke="none">
    <path d="m2 4 4-2h17l3 2v20l-3 2H6l-4-2z" fill="#5d9cc9" />
    <path d="M4 5h18v19H4z" fill="#8ec1e0" />
    <circle cx="13" cy="14" r="8.500" fill="#f07f1d" stroke="#fbd2a5" />
    <path d="M10.500 9.500v9l7-4.500z" fill="#fff" />
  </Svg>
);

const BookIcon = () => (
  <Svg w={32} h={30} stroke="none">
    <path d="m1 13 13 15 17-10-2-3-14 7L3 10z" fill="#c0392b" />
    <path d="M2 10c4-3 8-3 11 0l3 14c-4-3-8-3-10-1z" fill="#e9f3f9" />
    <path d="M13 10c2-4 6-6 11-5l6 11c-6 0-11 3-14 8z" fill="#a9cfe6" />
    <path d="m7 12 4 7M10 11l4 9M17 9l5 7M21 7l5 7" stroke="#5d93b5" />
  </Svg>
);

const SnipIcon = () => (
  <Svg w={30} h={32}>
    <ellipse cx="13" cy="10" rx="10" ry="7" fill="#f4f4f4" stroke="#c9484a" strokeWidth="1.500" />
    <path d="M3 13c2 5 8 7 12 5" stroke="#c9484a" strokeWidth="3" />
    <path d="M8 4l11 17M20 5l-2 15" stroke="#999" strokeWidth="2" />
    <circle cx="17" cy="25" r="3" stroke="#3f8fc4" strokeWidth="2.500" />
    <circle cx="24" cy="21" r="3" stroke="#3f8fc4" strokeWidth="2.500" />
  </Svg>
);

/* Office tile: coloured door with a letter, page behind it */
const OfficeIcon = ({ letter, door, page, children }) => (
  <span className="relative flex h-7 w-7 items-center">
    <Svg w={28} h={28} stroke="none">
      <path d="M14 4h13v20H14z" fill="#fff" stroke={page} />
      {children}
      <path d="M1 3 17 0v28L1 25z" fill={door} />
    </Svg>
    <span className="absolute left-[3px] w-3 text-center text-xs leading-4 font-bold text-white">{letter}</span>
  </span>
);

const ChromeIcon = () => (
  <Svg w={28} h={28} stroke="none">
    <circle cx="14" cy="14" r="13.500" fill="#4caf50" />
    <path d="M14 14 2.300 7.200A13.500 13.500 0 0 1 25.700 7.500H14z" fill="#e04a3f" />
    <path d="M25.700 7.500A13.500 13.500 0 0 1 14 27.500l5.600-10L14 7.500z" fill="#ffcd40" />
    <path d="m2.300 7.200 6 10.500L14 14z" fill="#e04a3f" />
    <circle cx="14" cy="14" r="6.300" fill="#fff" />
    <circle cx="14" cy="14" r="5" fill="#4a8af4" />
  </Svg>
);

const CamtasiaIcon = ({ recording }) => (
  <Svg w={30} h={28} stroke="none">
    <path d="m1 7 18-6 9 18-17 8z" fill="#d9d9d4" />
    <path d="m5 9 13-5 6 14-12 5z" fill="#1c2419" />
    <path d="m10 8 7-2 2 7-7 2z" fill="#4c6b3a" />
    <path d="m11 14 7-2 2 5-7 3z" fill="#79a05a" />
    {recording && <circle cx="23" cy="21" r="6" fill="#d8261c" stroke="#f3b3ae" />}
  </Svg>
);

const ControlPanelIcon = () => (
  <Svg w={32} h={30} stroke="none">
    <path d="M1 3h30v20H1z" fill="#3f97d3" stroke="#8ccbf0" />
    <circle cx="9" cy="10" r="4.500" fill="#f4f4f4" />
    <path d="M9 10V5.500a4.500 4.500 0 0 1 4.500 4.500z" fill="#f5a623" />
    <path d="M17 7h11v4H17zM17 14h11v4H17z" fill="#c8e4f6" />
    <path d="M5 18h2v2H5zM9 18h2v2H9z" fill="#f5d442" />
    <ellipse cx="16" cy="25" rx="6" ry="4.500" fill="#e4e4e4" />
  </Svg>
);

const TASKS = [
  { name: 'Explorador', icon: <FolderIcon /> },
  { name: 'Reproductor', icon: <MediaIcon /> },
  { name: 'Diccionario', icon: <BookIcon /> },
  { name: 'Recortes', icon: <SnipIcon /> },
  {
    name: 'Excel',
    state: 'active',
    icon: (
      <OfficeIcon letter="X" door="#1e7145" page="#1e7145">
        <path d="M18 7.500h8M18 11.500h8M18 15.500h8M18 19.500h8M21.500 5v18" stroke="#1e7145" strokeWidth="1.500" />
      </OfficeIcon>
    ),
  },
  {
    name: 'OneNote',
    icon: (
      <OfficeIcon letter="N" door="#80397b" page="#80397b">
        <path d="M19.500 5v18M22.500 5v18M25 7v4M25 13v4M25 19v3" stroke="#80397b" strokeWidth="1.500" />
      </OfficeIcon>
    ),
  },
  {
    name: 'Outlook',
    icon: (
      <OfficeIcon letter="O" door="#0072c6" page="#0d1522">
        <path d="M14 3h14v4H14zM14 21h14v4H14z" fill="#0d1522" />
        <path d="m17 10 4 5 6-7" stroke="#0072c6" strokeWidth="1.800" />
      </OfficeIcon>
    ),
  },
  {
    name: 'PowerPoint',
    icon: (
      <OfficeIcon letter="P" door="#d04525" page="#d04525">
        <circle cx="21" cy="11" r="4" fill="#d04525" />
        <path d="M21 11V6.500a4.500 4.500 0 0 1 4.500 4.500z" fill="#fff" />
        <path d="M18 18.500h8M18 21.500h8" stroke="#d04525" strokeWidth="1.500" />
      </OfficeIcon>
    ),
  },
  {
    name: 'Word',
    icon: (
      <OfficeIcon letter="W" door="#2a5699" page="#2a5699">
        <path d="M18 7.500h7M18 10.500h7M18 13.500h7M18 16.500h7M18 19.500h7" stroke="#2a5699" strokeWidth="1.500" />
      </OfficeIcon>
    ),
  },
  { name: 'Chrome', state: 'open', icon: <ChromeIcon /> },
  { name: 'Camtasia', state: 'open', icon: <CamtasiaIcon /> },
  { name: 'Panel de control', state: 'open', icon: <ControlPanelIcon /> },
  { name: 'Grabadora', state: 'open', icon: <CamtasiaIcon recording /> },
];

const Taskbar = () => (
  <div className="flex h-[37px] shrink-0 items-stretch border-t border-[#3a424c] bg-linear-to-r from-[#0c121c] via-[#101a2c] to-[#060a12] text-white">
    <button type="button" aria-label="Inicio" className="flex w-[55px] items-center pl-[7px]">
      <StartOrb />
    </button>
    {TASKS.map((t) => (
      <button
        key={t.name}
        type="button"
        aria-label={t.name}
        className={clsx(
          'mx-[2px] flex w-[54px] items-center justify-center rounded-xs border',
          t.state === 'active' && 'border-[#c8cccf] bg-linear-to-b from-[#7b807f] to-[#b5bab8]',
          t.state === 'open' && 'border-[#6a727e] bg-linear-to-b from-[#5a606b] to-[#1a2436]',
          !t.state && 'border-transparent',
        )}
      >
        {t.icon}
      </button>
    ))}
    <div className="ml-auto flex items-center text-[11px]">
      <span className="pr-[15px] pb-1">ES</span>
      <button type="button" aria-label="Iconos ocultos" className="pr-[15px]">
        <Svg w={8} h={5}><path d="M0 5h8L4 0z" fill="currentColor" stroke="none" /></Svg>
      </button>
      <div className="flex items-center gap-2">
        <Svg w={14} h={14}>
          <path d="M1.500 0v14" strokeWidth="1.500" />
          <path d="M3 1h5v2h5l-2 5H8V6H3z" fill="currentColor" stroke="none" />
        </Svg>
        <Svg w={14} h={14}>
          <path d="M0 4.500h3l4-4v13l-4-4H0z" fill="currentColor" stroke="none" />
          <path d="M9 5c1 1 1 3 0 4M11 3c2 2 2 6 0 8" />
        </Svg>
        <Svg w={14} h={14}>
          <path d="M4 4.500h9v6.500H3V6M6 13.500h5M8.500 11v2" strokeWidth="1.400" />
          <path d="M0 0h5v4H0z" fill="currentColor" stroke="none" />
        </Svg>
      </div>
      <time className="w-[82px] text-center leading-4">
        04:14 p.m.
        <br />
        30/01/2017
      </time>
      <button type="button" aria-label="Mostrar escritorio" className="h-full w-[13px] border border-[#4a525c] bg-linear-to-b from-[#5a606b] to-[#10141c]" />
    </div>
  </div>
);

export default function App() {
  return (
    <div className="flex h-screen flex-col overflow-hidden bg-black pr-[3px] pl-[2px] font-['Open_Sans',sans-serif]">
      <div className="relative shrink-0 bg-[#217346]">
        <BrushBackground />
        <TitleBar />
        <RibbonTabs />
      </div>
      <Ribbon />
      <FormulaBar />
      <main className="flex min-h-0 flex-1">
        <Sheet />
        <VerticalScroll />
      </main>
      <SheetTabs />
      <StatusBar />
      <Taskbar />
    </div>
  );
}
